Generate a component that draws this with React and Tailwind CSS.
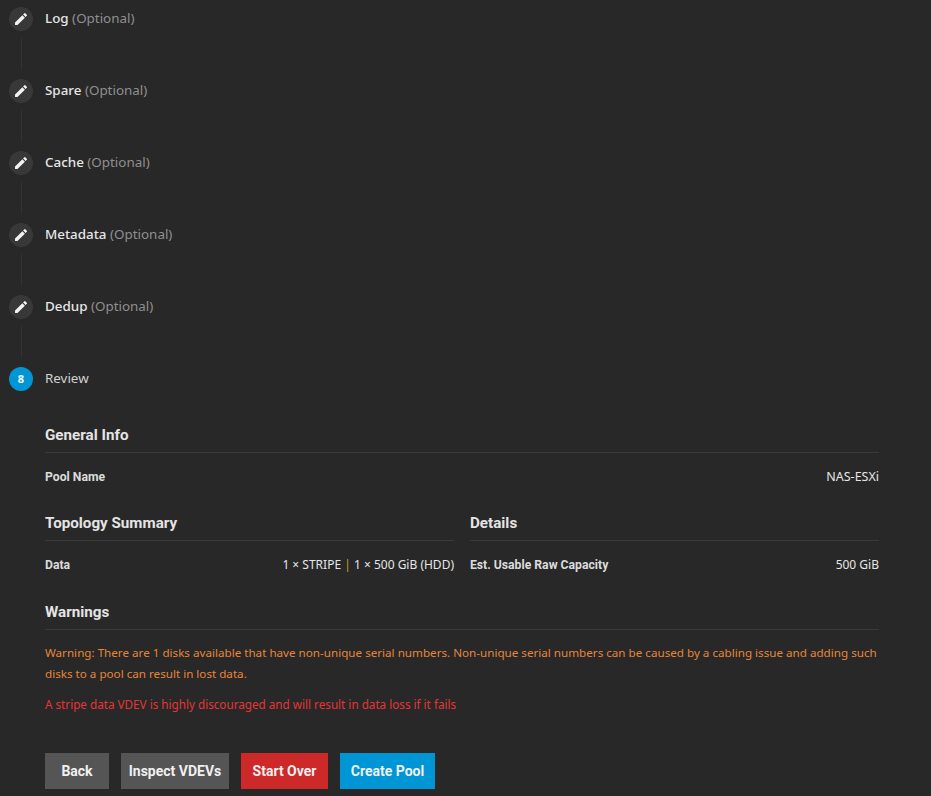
function Pencil() {
  return (
    <svg viewBox="0 0 24 24" className="w-4 h-4" fill="#f2f2f2">
      <path d="M3 17.25V21h3.75L17.81 9.94l-3.75-3.75L3 17.25zM20.71 7.04a1 1 0 0 0 0-1.41l-2.34-2.34a1 1 0 0 0-1.41 0l-1.83 1.83 3.75 3.75 1.83-1.83z" />
    </svg>
  );
}
function Step({ name }) {
  return (
    <div className="h-[72px]">
      <div className="flex items-center h-9">
        <div className="w-6 h-6 ml-[9px] mt-[2px] rounded-full bg-[#383838] flex items-center justify-center"><Pencil /></div>
        <div className="ml-3 text-[13.4px] leading-5">
          <span className="text-[#e6e6e6] font-medium">{name}</span>
          <span className="text-[#8f8f8f]"> (Optional)</span>
        </div>
      </div>
      <div className="w-px h-8 bg-[#313131] ml-[21px] mt-[2px]" />
    </div>
  );
}
function Heading({ children }) {
  return <div className="font-['Roboto',sans-serif] text-[15.2px] leading-5 font-bold text-[#e4e4e4] pt-px pb-[7px] border-b border-[#3a3a3a]">{children}</div>;
}
function Row({ label, value }) {
  return (
    <div className="flex justify-between items-center text-[12px] leading-5 mt-[14px]">
      <span className="font-['Roboto',sans-serif] text-[12.2px] font-bold text-[#dcdcdc]">{label}</span>
      <span className="text-[#e6e6e6]">{value}</span>
    </div>
  );
}
function Btn({ w, bg, children }) {
  return <button className={`h-9 ${w} ${bg} font-['Roboto',sans-serif] text-[14px] font-bold text-[#f0f0f0] flex items-center justify-center`}>{children}</button>;
}
export default function App() {
  return (
    <div className="h-[796px] overflow-hidden bg-[#282828] font-['Noto_Sans','Open_Sans',sans-serif]">
      <Step name="Log" />
      <Step name="Spare" />
      <Step name="Cache" />
      <Step name="Metadata" />
      <Step name="Dedup" />
      <div className="flex items-center h-9">
        <div className="w-6 h-6 ml-[9px] mt-[2px] rounded-full bg-[#0095d5] flex items-center justify-center text-[11px] font-bold text-white">8</div>
        <div className="ml-3 text-[13.4px] leading-5 text-[#d0d0d0]">Review</div>
      </div>
      <div className="ml-[45px] w-[834px] mt-[28px]">
        <Heading>General Info</Heading>
        <Row label="Pool Name" value={<span className="text-[12.5px]">NAS-ESXi</span>} />
        <div className="grid grid-cols-2 gap-4 mt-[25px]">
          <div>
            <Heading>Topology Summary</Heading>
            <Row label="Data" value={<>1 × STRIPE <span className="text-[#c9a227]">|</span> 1 × 500 GiB (HDD)</>} />
          </div>
          <div>
            <Heading>Details</Heading>
            <Row label="Est. Usable Raw Capacity" value="500 GiB" />
          </div>
        </div>
        <div className="mt-[26px]"><Heading>Warnings</Heading></div>
        <p className="mt-3 text-[11.65px] leading-[21px] text-[#e5853a]">Warning: There are 1 disks available that have non-unique serial numbers. Non-unique serial numbers can be caused by a cabling issue and adding such disks to a pool can result in lost data.</p>
        <p className="mt-[10px] text-[11.7px] leading-[21px] text-[#e53535]">A stripe data VDEV is highly discouraged and will result in data loss if it fails</p>
        <div className="flex gap-3 mt-[38px]">
          <Btn w="w-[64px]" bg="bg-[#555555]">Back</Btn>
          <Btn w="w-[108px]" bg="bg-[#555555]">Inspect VDEVs</Btn>
          <Btn w="w-[87px]" bg="bg-[#ce2929]">Start Over</Btn>
          <Btn w="w-[95px]" bg="bg-[#0095d5]">Create Pool</Btn>
        </div>
      </div>
    </div>
  );
}
